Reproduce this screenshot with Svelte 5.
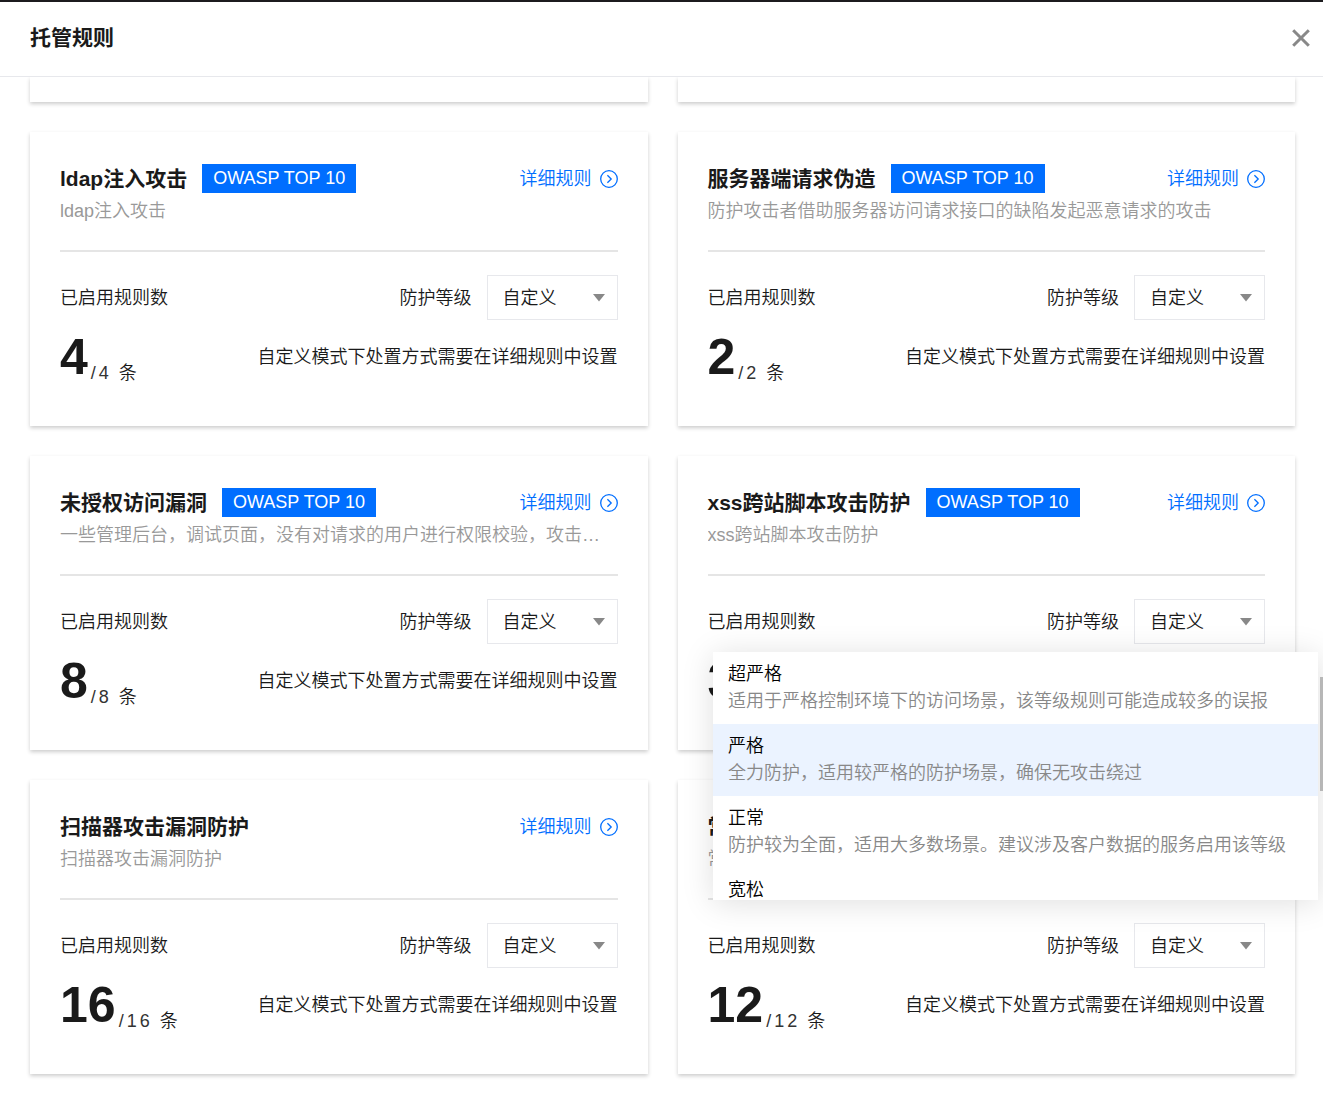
<script lang="ts">
  type Rule = {
    id: string;
    name: string;
    desc: string;
    owasp: boolean;
    enabled: number;
    total: number;
  };

  const rules: Rule[] = [
    { id: 'ldap', name: 'ldap注入攻击', desc: 'ldap注入攻击', owasp: true, enabled: 4, total: 4 },
    { id: 'ssrf', name: '服务器端请求伪造', desc: '防护攻击者借助服务器访问请求接口的缺陷发起恶意请求的攻击', owasp: true, enabled: 2, total: 2 },
    { id: 'unauth', name: '未授权访问漏洞', desc: '一些管理后台，调试页面，没有对请求的用户进行权限校验，攻击者可直接访问', owasp: true, enabled: 8, total: 8 },
    { id: 'xss', name: 'xss跨站脚本攻击防护', desc: 'xss跨站脚本攻击防护', owasp: true, enabled: 38, total: 38 },
    { id: 'scanner', name: '扫描器攻击漏洞防护', desc: '扫描器攻击漏洞防护', owasp: false, enabled: 16, total: 16 },
    { id: 'common', name: '常规', desc: '常规', owasp: false, enabled: 12, total: 12 },
  ];

  const levels = [
    { name: '超严格', desc: '适用于严格控制环境下的访问场景，该等级规则可能造成较多的误报' },
    { name: '严格', desc: '全力防护，适用较严格的防护场景，确保无攻击绕过' },
    { name: '正常', desc: '防护较为全面，适用大多数场景。建议涉及客户数据的服务启用该等级' },
    { name: '宽松', desc: '' },
  ];

  let openRule = $state<string | null>('xss');
  let activeLevel = $state('严格');
  let chosen = $state<Record<string, string>>(
    Object.fromEntries(rules.map((r) => [r.id, '自定义']))
  );

  function pick(id: string, level: string) {
    chosen[id] = level;
    openRule = null;
  }
</script>

<div class="drawer">
  <header class="drawer-header">
    <h1>托管规则</h1>
    <button class="close" aria-label="关闭">
      <svg width="18" height="18" viewBox="0 0 18 18" aria-hidden="true">
        <path d="M1.2 1.2L16.8 16.8M16.8 1.2L1.2 16.8" stroke="#888" stroke-width="3" fill="none" />
      </svg>
    </button>
  </header>

  <main class="drawer-body">
    <div class="grid">
      <div class="card card--tail"></div>
      <div class="card card--tail"></div>

      {#each rules as rule (rule.id)}
        <section class="card">
          <div class="card-head">
            <h2>{rule.name}</h2>
            {#if rule.owasp}<span class="badge">OWASP TOP 10</span>{/if}
            <a class="detail" href="#{rule.id}">
              详细规则
              <svg width="18" height="18" viewBox="0 0 18 18" fill="none" stroke="currentColor" stroke-width="1.3" aria-hidden="true">
                <circle cx="9" cy="9" r="8.3" />
                <path d="M7.4 5.2L11.2 9L7.4 12.8" />
              </svg>
            </a>
          </div>
          <p class="desc">{rule.desc}</p>

          <div class="level-row">
            <span>已启用规则数</span>
            <label for="level-{rule.id}">防护等级</label>
            <div class="select-wrap">
              <select
                id="level-{rule.id}"
                bind:value={chosen[rule.id]}
                onmousedown={(e) => { e.preventDefault(); openRule = openRule === rule.id ? null : rule.id; }}
              >
                <option>自定义</option>
                {#each levels as level}
                  <option>{level.name}</option>
                {/each}
              </select>
              <svg class="caret" width="12" height="8" viewBox="0 0 12 8" aria-hidden="true">
                <path d="M0 0H12L6 7.5Z" fill="#888" />
              </svg>

              {#if openRule === rule.id}
                <div class="menu" role="listbox" aria-label="防护等级">
                  {#each levels as level}
                    <button
                      class="menu-item"
                      class:menu-item--active={activeLevel === level.name}
                      role="option"
                      aria-selected={activeLevel === level.name}
                      onmouseenter={() => { activeLevel = level.name; }}
                      onclick={() => pick(rule.id, level.name)}
                    >
                      <span>{level.name}</span>
                      <span class="menu-desc">{level.desc}</span>
                    </button>
                  {/each}
                </div>
              {/if}
            </div>
          </div>

          <div class="count-row">
            <strong>{rule.enabled}</strong>
            <span class="total">/{rule.total}</span>
            <span class="unit">条</span>
            <span class="hint">自定义模式下处置方式需要在详细规则中设置</span>
          </div>
        </section>
      {/each}
    </div>
    <div class="scroll-thumb"></div>
  </main>
</div>

<style>
  :global(body) {
    background: #fff;
  }

  .drawer {
    border-top: 2px solid #1c1b1e;
    color: #1a1a1a;
    font-family: "Liberation Sans", "Noto Sans CJK SC", sans-serif;
    font-size: 18px;
    font-weight: 350;
    line-height: 28px;
  }

  .drawer-header {
    display: flex;
    align-items: center;
    justify-content: space-between;
    height: 72px;
    padding: 0 13px 2px 30px;
    border-bottom: 1px solid #e7e8ec;
  }

  h1, h2, p { margin: 0; }

  h1, h2 {
    font-size: 21px;
    font-weight: 700;
    line-height: 28px;
  }

  .close {
    display: flex;
    padding: 0;
    border: none;
    background: transparent;
    cursor: pointer;
  }

  .drawer-body {
    position: relative;
    overflow: hidden;
    padding: 0 28px 28px 30px;
  }

  .grid {
    display: grid;
    grid-template-columns: repeat(2, minmax(0, 1fr));
    gap: 30px;
  }

  .card {
    padding: 32px 30px 42px;
    background: #fff;
    box-shadow: 0 2px 4px rgba(0, 0, 0, 0.2);
  }

  .card--tail { padding: 25px 0 0; }

  .card-head {
    display: flex;
    align-items: center;
    height: 29px;
  }

  .badge {
    margin-left: 15px;
    padding: 0 11px;
    background: #006eff;
    color: #fff;
    font-weight: 400;
    line-height: 29px;
  }

  .detail {
    display: flex;
    align-items: center;
    gap: 8px;
    margin-left: auto;
    color: #006eff;
    text-decoration: none;
  }

  .desc {
    margin-top: 4px;
    padding-bottom: 25px;
    border-bottom: 2px solid #e5e5e5;
    color: #999;
    overflow: hidden;
    text-overflow: ellipsis;
    white-space: nowrap;
  }

  .level-row {
    display: flex;
    align-items: center;
    margin-top: 23px;
  }

  label {
    margin-left: auto;
    margin-right: 15px;
  }

  .select-wrap {
    position: relative;
    width: 131px;
  }

  select {
    display: block;
    width: 100%;
    height: 45px;
    padding: 0 15px;
    border: 1px solid #e7e8ec;
    border-radius: 0;
    background: #fff;
    color: inherit;
    font: inherit;
    appearance: none;
    cursor: pointer;
  }

  .caret {
    position: absolute;
    top: 19px;
    right: 13px;
    pointer-events: none;
  }

  .menu {
    position: absolute;
    top: calc(100% + 8px);
    right: -53px;
    z-index: 10;
    width: 605px;
    height: 248px;
    overflow: hidden;
    background: #fff;
    box-shadow: 0 3px 30px rgba(0, 0, 0, 0.13);
  }

  .menu-item {
    display: flex;
    flex-direction: column;
    width: 100%;
    height: 72px;
    padding: 9px 15px;
    border: none;
    background: #fff;
    color: #000;
    font: inherit;
    line-height: 27px;
    text-align: left;
    white-space: nowrap;
    cursor: pointer;
  }

  .menu-item--active { background: #ebf3ff; }

  .menu-desc { color: #888; }

  .count-row {
    display: flex;
    align-items: flex-end;
    margin-top: 10px;
  }

  strong {
    font-size: 50px;
    font-weight: 700;
    line-height: 54px;
  }

  .total {
    margin-left: 3px;
    color: #333;
    letter-spacing: 3px;
    line-height: 22px;
  }

  .unit {
    margin-left: 7px;
    line-height: 22px;
  }

  .hint {
    align-self: center;
    margin-left: auto;
  }

  .scroll-thumb {
    position: absolute;
    top: 600px;
    right: 0;
    width: 3px;
    height: 114px;
    background: #c1c1c1;
  }
</style>
